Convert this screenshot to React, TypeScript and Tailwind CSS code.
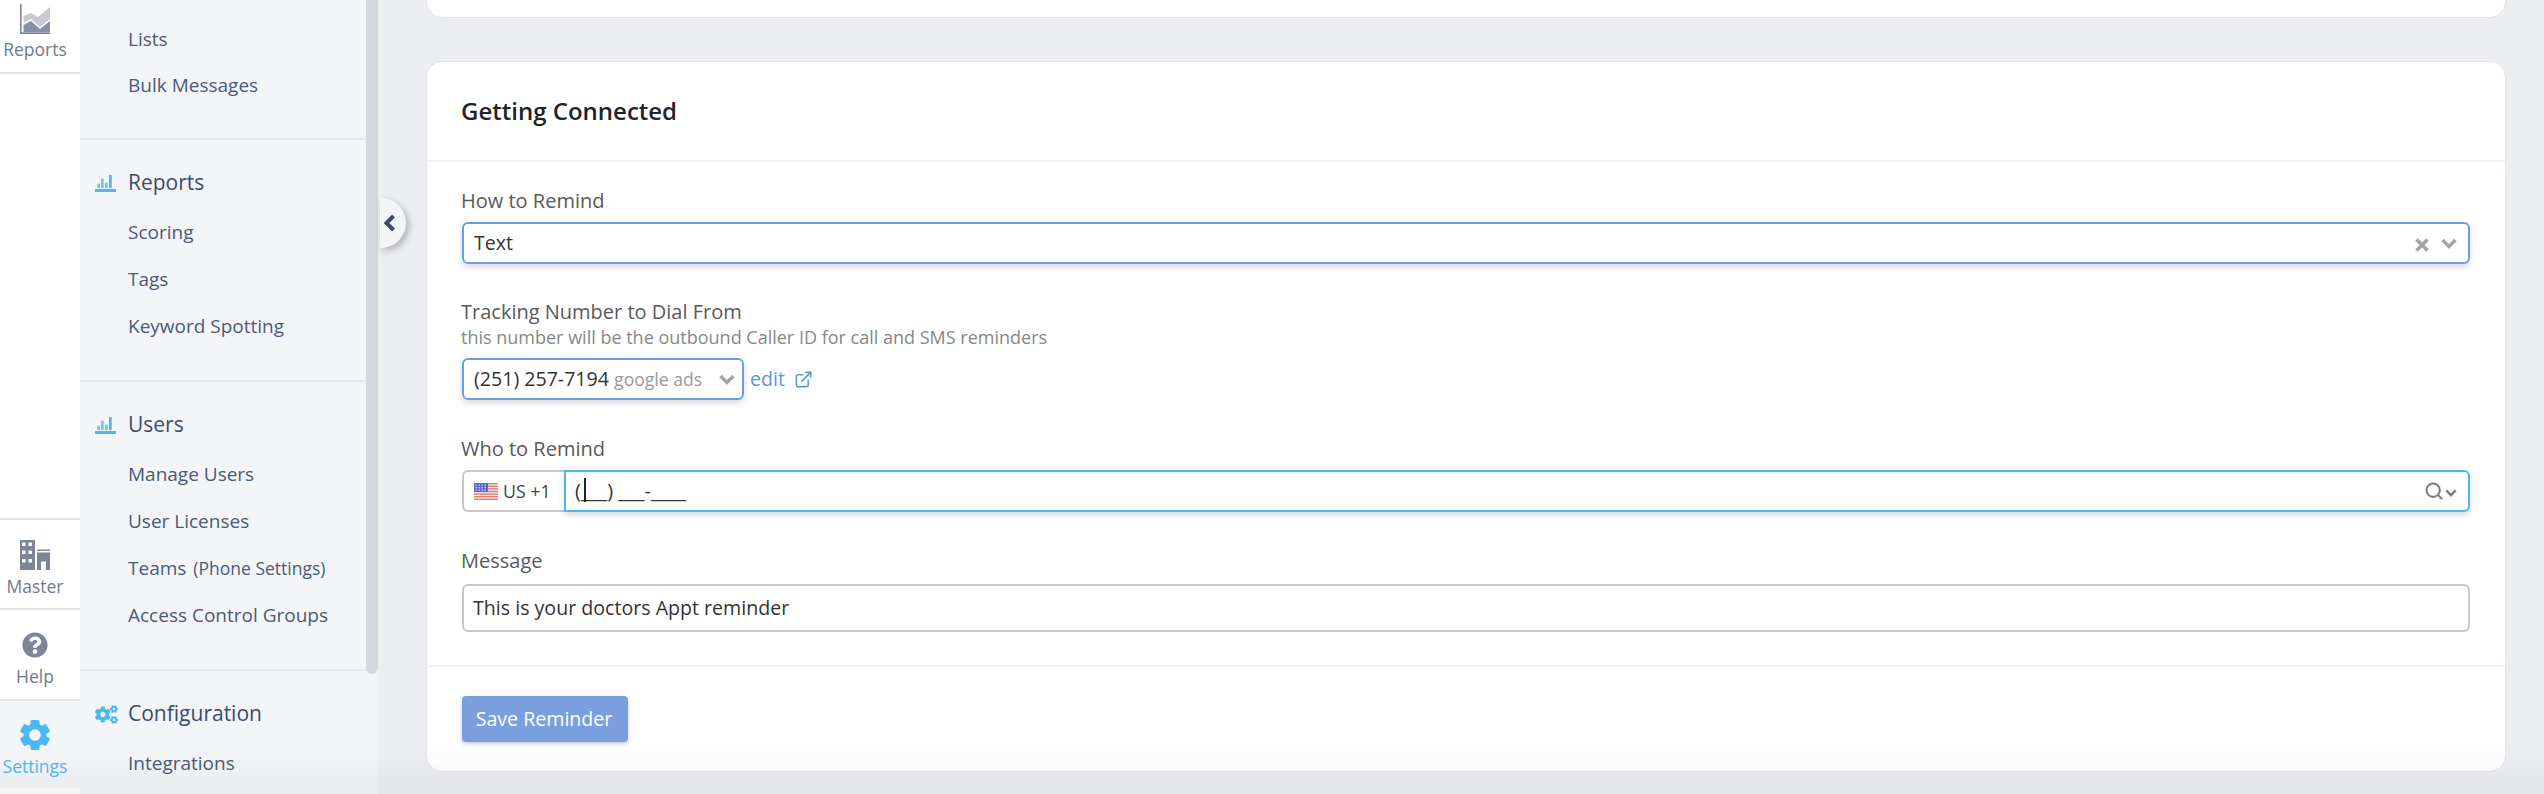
import { FaCogs, FaQuestionCircle } from "react-icons/fa";
import { ExternalLink, Search } from "lucide-react";

function BarsIcon() {
  return (
    <svg viewBox="0 0 21 17" className="w-[21px] h-[17px] text-[#4db8f0]" fill="currentColor">
      <rect x="0" y="14" width="21" height="3" />
      <rect x="2.300" y="8.700" width="2.700" height="4.300" opacity="0.8" />
      <rect x="6" y="3.700" width="2.700" height="9.300" opacity="0.8" />
      <rect x="10" y="7.700" width="2.700" height="5.300" opacity="0.8" />
      <rect x="14" y="0" width="2.700" height="13" />
    </svg>
  );
}

function ReportsIcon() {
  return (
    <svg viewBox="0 0 30 30" className="w-[30px] h-[30px]">
      <path d="M0 0h1.600v28.200H30V30H0z" fill="#7c8698" />
      <path d="M3.500 12L11 9l7 4 12-10v12L20 23l-9-8-7.500 4z" fill="#c5cad4" />
      <path d="M3.500 21L11 17l9 8 10-8v11H3.500z" fill="#8490a4" />
    </svg>
  );
}

function BuildingIcon() {
  return (
    <svg viewBox="0 0 30 30" className="w-[30px] h-[30px]" fill="#7c8698">
      <path
        fillRule="evenodd"
        d="M0 0h15v30H0zM2 2.500v3.500h3.500V2.500zm6.500 0v3.500H12V2.500zM2 10.500V14h3.500v-3.500zm6.500 0V14H12v-3.500zM2 19v3.500h3.500V19zm6.500 0v3.500H12V19z"
      />
      <path d="M17 9.500h13V11H17zM17 12.500h13V30h-4v-8.500h-5V30h-4z" />
    </svg>
  );
}

function CogIcon() {
  return (
    <svg viewBox="0 0 30 30" className="w-[30px] h-[30px]">
      <g fill="#4db8f0">
        <circle cx="15" cy="15" r="11.500" />
        <rect x="10.500" y="0" width="9" height="30" rx="1.500" />
        <rect x="10.500" y="0" width="9" height="30" rx="1.500" transform="rotate(60 15 15)" />
        <rect x="10.500" y="0" width="9" height="30" rx="1.500" transform="rotate(120 15 15)" />
      </g>
      <circle cx="15" cy="15" r="5.800" fill="#f4f5f8" />
    </svg>
  );
}

function ChevronDown({ className }: { className: string }) {
  return (
    <svg viewBox="0 0 16 11" className={className} fill="none" stroke="currentColor" strokeWidth="3.500">
      <path d="M1.500 2L8 8.500 14.500 2" />
    </svg>
  );
}

function Flag() {
  return (
    <svg viewBox="0 0 24 17" className="w-6 h-[17px]">
      <rect width="24" height="17" fill="#eef0f5" />
      {[0, 2.600, 5.200, 7.800, 10.400, 13, 15.600].map((y) => (
        <rect key={y} y={y} width="24" height="1.400" fill="#df7c72" />
      ))}
      <rect width="14" height="9" fill="#5668c5" />
      {[1.500, 4, 6.500].map((y) =>
        [1.500, 4.500, 7.500, 10.500].map((x) => (
          <rect key={`${x}-${y}`} x={x} y={y} width="1.300" height="1.300" fill="#dfe3f5" />
        ))
      )}
    </svg>
  );
}

function RailItem({ icon, label, top, active }: { icon: React.ReactNode; label: string; top: string; active?: boolean }) {
  return (
    <div
      className={
        active
          ? `${top} flex flex-col items-center border-t-[2px] border-[#e3e5ea] pr-[10px] pt-[19px] bg-[#f4f5f8]`
          : `${top} flex flex-col items-center border-t-[2px] border-[#e3e5ea] pr-[10px] pt-[20px]`
      }
    >
      {icon}
      <span className={active ? "text-[17.500px] leading-[32px] text-[#4db8f0]" : "text-[17.500px] leading-[32px] text-[#6f7a8e]"}>
        {label}
      </span>
    </div>
  );
}

function NavItem({ label, small }: { label: string; small?: string }) {
  return (
    <div className="h-[47px] flex items-center pl-[48px] text-[19px] text-[#4a5a78]">
      {label}
      {small && <span className="ml-[7px] text-[17.500px]">{small}</span>}
    </div>
  );
}

function NavSection({ icon, title, items }: { icon: React.ReactNode; title: string; items: { label: string; small?: string }[] }) {
  return (
    <div className="border-t-[2px] border-[#e3e5ea] pt-[23px] pb-[30px]">
      <div className="h-[40px] flex items-center text-[21px] text-[#3c4b6b] mb-[6px]">
        <div className="w-[48px] pl-[15px] shrink-0">{icon}</div>
        {title}
      </div>
      {items.map((item) => (
        <NavItem key={item.label} label={item.label} small={item.small} />
      ))}
    </div>
  );
}

export default function App() {
  return (
    <div className="relative h-[794px] flex overflow-hidden bg-[#edeef2] font-['Open_Sans',sans-serif]">
      {/* left rail */}
      <div className="w-[80px] shrink-0 bg-white flex flex-col">
        <div className="h-[74px] flex flex-col items-center border-b-[2px] border-[#e3e5ea] pr-[10px] pt-[4px]">
          <ReportsIcon />
          <span className="text-[17.500px] leading-[30px] text-[#6f7a8e]">Reports</span>
        </div>
        <div className="flex-1" />
        <RailItem top="h-[90px]" icon={<BuildingIcon />} label="Master" />
        <RailItem
          top="h-[91px]"
          icon={<FaQuestionCircle className="w-[26px] h-[26px] my-[2px] text-[#7c8698]" />}
          label="Help"
        />
        <RailItem top="h-[89px]" icon={<CogIcon />} label="Settings" active />
        <div className="h-[6px]" />
      </div>

      {/* sub nav */}
      <div className="relative w-[298px] shrink-0 bg-[#f4f5f8]">
        <div className="w-[286px]">
          <div className="pt-[16px] pb-[30px] [&>div]:h-[46px]">
            <NavItem label="Lists" />
            <NavItem label="Bulk Messages" />
          </div>
          <NavSection
            icon={<BarsIcon />}
            title="Reports"
            items={[{ label: "Scoring" }, { label: "Tags" }, { label: "Keyword Spotting" }]}
          />
          <NavSection
            icon={<BarsIcon />}
            title="Users"
            items={[
              { label: "Manage Users" },
              { label: "User Licenses" },
              { label: "Teams", small: "(Phone Settings)" },
              { label: "Access Control Groups" },
            ]}
          />
          <NavSection
            icon={<FaCogs className="w-[23px] h-[23px] text-[#4db8f0]" />}
            title="Configuration"
            items={[{ label: "Integrations" }]}
          />
        </div>
        {/* scrollbar */}
        <div className="absolute top-0 right-0 w-[12px] h-[674px] bg-[#d4d7e0] rounded-b-md" />
      </div>

      {/* main */}
      <div className="relative flex-1 min-w-0 pl-[48px] pr-[38px]">
        <div className="absolute left-[2px] top-[198px] w-[26px] h-[50px] bg-[#f4f5f8] rounded-r-full shadow-[3px_3px_7px_rgba(0,0,0,0.25)] flex items-center pl-[3px]">
          <svg viewBox="0 0 12 18" className="w-[12px] h-[18px] text-[#3c4b6b]" fill="none" stroke="currentColor" strokeWidth="4">
            <path d="M10.500 2L3.500 9l7 7" />
          </svg>
        </div>

        <div className="h-[19px] -mt-[1px] bg-white border border-[#e3e5ea] rounded-b-[16px]" />

        <div className="mt-[43px] h-[711px] bg-white border border-[#e3e5ea] rounded-[16px] flex flex-col">
          <div className="h-[100px] shrink-0 flex items-center pl-[34px] text-[24px] font-semibold text-[#212529] border-b-[2px] border-[#f0f3fb]">
            Getting Connected
          </div>

          <div className="h-[505px] shrink-0 px-[35px] pt-[26px] text-[20px] text-[#5a5a5a] border-b-[2px] border-[#f0f3fb]">
            <div className="-ml-[1px] leading-[26px]">How to Remind</div>
            <div className="mt-[8px] h-[42px] flex items-center justify-between pl-[10px] pr-[11px] border-[2px] border-[#6a9de0] rounded-[6px] shadow-[0_3px_6px_rgba(0,0,0,0.15)] text-[19.600px] text-[#333]">
              <span>Text</span>
              <span className="flex items-center gap-[12px] text-[#a3a3a3]">
                <svg viewBox="0 0 14 14" className="w-[14px] h-[14px] mt-[3px]" fill="none" stroke="currentColor" strokeWidth="3.500">
                  <path d="M1.500 1.500l11 11M12.500 1.500l-11 11" />
                </svg>
                <ChevronDown className="w-[16px] h-[11px]" />
              </span>
            </div>

            <div className="-ml-[1px] mt-[35px] leading-[26px]">Tracking Number to Dial From</div>
            <div className="-ml-[1px] text-[18px] leading-[24px] text-[#888]">
              this number will be the outbound Caller ID for call and SMS reminders
            </div>
            <div className="mt-[9px] flex items-center">
              <div className="w-[282px] h-[42px] flex items-center justify-between pl-[10px] pr-[7px] border-[2px] border-[#6a9de0] rounded-[6px] shadow-[0_3px_6px_rgba(0,0,0,0.15)] text-[19.600px] text-[#333]">
                <span>
                  (251) 257-7194 <span className="text-[17.600px] text-[#999]">google ads</span>
                </span>
                <ChevronDown className="w-[16px] h-[11px] text-[#a3a3a3]" />
              </div>
              <span className="ml-[6px] text-[19.600px] text-[#5b96e0]">edit</span>
              <ExternalLink className="ml-[9px] w-[19px] h-[19px] text-[#5b96e0]" />
            </div>

            <div className="-ml-[1px] mt-[36px] leading-[26px]">Who to Remind</div>
            <div className="mt-[8px] h-[42px] flex">
              <div className="w-[102px] shrink-0 flex items-center gap-[5px] pl-[10px] border-[2px] border-r-0 border-[#c8c8c8] rounded-l-[6px] text-[#444] text-[17.800px]">
                <Flag />
                US +1
              </div>
              <div className="flex-1 flex items-center justify-between pl-[9px] pr-[11px] border-[2px] border-[#4db8f0] rounded-r-[6px] shadow-[0_3px_6px_rgba(0,0,0,0.15)] text-[20px] text-[#333]">
                <span className="relative">
                  (___) ___-____
                  <span className="absolute left-[9px] top-[2px] w-[1.500px] h-[24px] bg-[#222]" />
                </span>
                <span className="flex items-center text-[#7d7d7d]">
                  <Search className="w-[20px] h-[20px]" strokeWidth={2.500} />
                  <ChevronDown className="ml-[1px] w-[12px] h-[8px] mt-[3px]" />
                </span>
              </div>
            </div>

            <div className="-ml-[1px] mt-[36px] leading-[26px]">Message</div>
            <div className="mt-[10px] h-[48px] flex items-center pl-[9px] border-[2px] border-[#c8c8c8] rounded-[6px] text-[19.600px] text-[#333]">
              This is your doctors Appt reminder
            </div>
          </div>

          <div className="flex-1 pl-[35px] pt-[29px]">
            <button className="w-[166px] h-[46px] pr-[2px] bg-[#7a9ede] text-white text-[19.600px] rounded-[4px] shadow-[0_2px_4px_rgba(0,0,0,0.2)]">
              Save Reminder
            </button>
          </div>
        </div>
      </div>

      {/* bottom fade */}
      <div className="absolute left-0 right-0 bottom-0 h-[50px] bg-gradient-to-b from-transparent to-[#0000000a] pointer-events-none" />
    </div>
  );
}
